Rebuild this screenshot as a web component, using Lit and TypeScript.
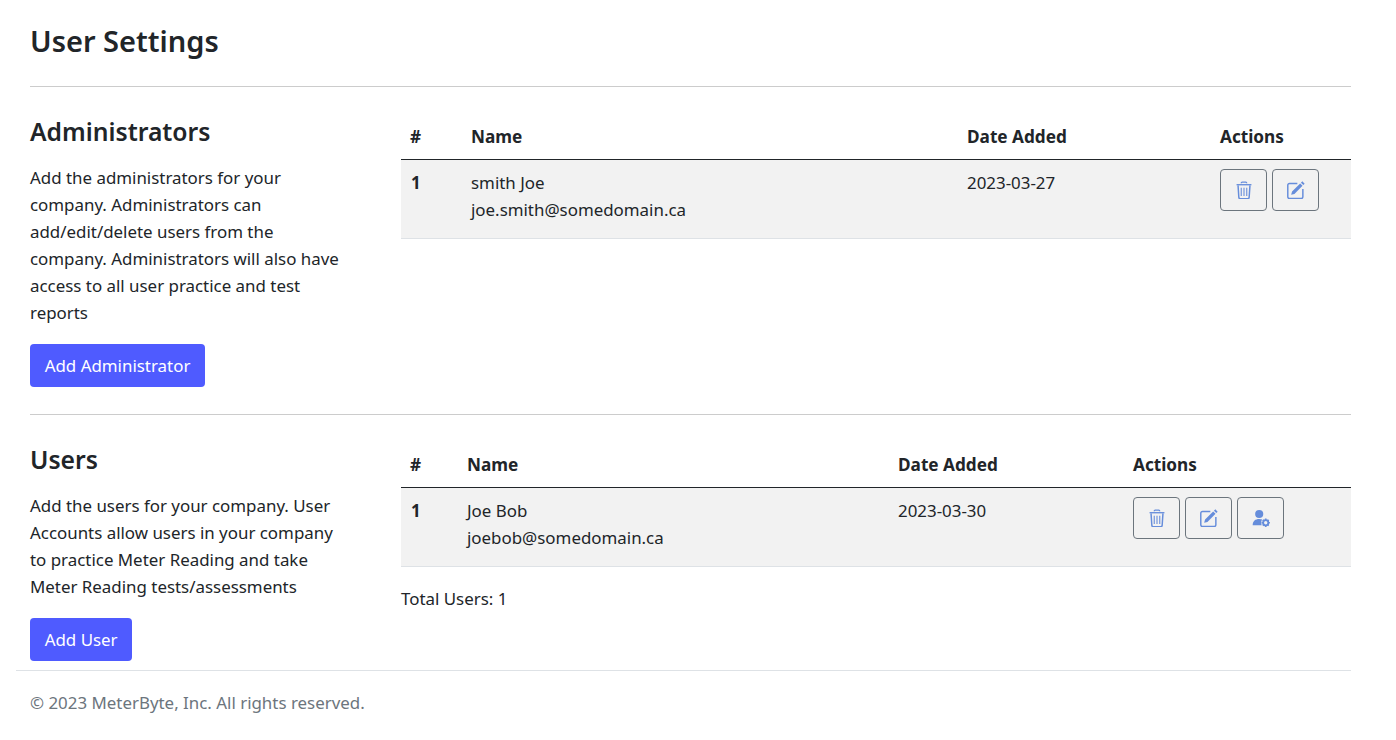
import { LitElement, html, css, svg } from "lit";
import { customElement } from "lit/decorators.js";

const trash = svg`<path d="M5.6 1.9c0-.5.3-.9.8-.9h3.2c.5 0 .8.4.8.9" fill="none" stroke="currentColor" stroke-width="1.2"/><path d="M1.4 2.7h13.2v1.2H1.4z" fill="currentColor"/><path d="M2.7 3.9l.7 10.6c.05.8.6 1.3 1.3 1.3h6.6c.7 0 1.25-.5 1.3-1.3l.7-10.6" fill="none" stroke="currentColor" stroke-width="1.3"/><path d="M5.6 6v7.4M8 6v7.4M10.4 6v7.4" stroke="currentColor" stroke-width="1.2" fill="none" opacity=".8"/>`;
const edit = svg`<path d="M9.2 2.2H2.2C1.3 2.2.7 2.8.7 3.7v10.4c0 .9.6 1.5 1.5 1.5h10.4c.9 0 1.5-.6 1.5-1.5V7" fill="none" stroke="currentColor" stroke-width="1.3"/><path d="M13.6.3l2.1 2.1-1.2 1.2-2.1-2.1zM11.7 2.2l2.1 2.1-7.2 7.2-2.9.8.8-2.9z" fill="currentColor"/>`;
const userCog = svg`<circle cx="6.4" cy="4.4" r="3.6" fill="currentColor"/><path d="M.6 14.4c0-3.8 2.4-5.6 5.8-5.6 1 0 1.9.15 2.7.5-.9 1.1-1.2 3.2-.5 5.1z" fill="currentColor"/><circle cx="12.2" cy="12.2" r="2.3" fill="none" stroke="currentColor" stroke-width="1.6"/><path d="M12.2 8.5v1.6M12.2 14.3v1.6M8.5 12.2h1.6M14.3 12.2h1.6M9.6 9.6l1.1 1.1M13.7 13.7l1.1 1.1M14.8 9.6l-1.1 1.1M10.7 13.7l-1.1 1.1" stroke="currentColor" stroke-width="1.5" fill="none"/>`;

const icon = (body: unknown) => html`<button class="act"><svg viewBox="0 0 16 16" width="18" height="18" aria-hidden="true">${body}</svg></button>`;

@customElement("app-root")
export class AppRoot extends LitElement {
  static styles = css`
    :host { display: block; font-family: "Noto Sans", "Liberation Sans", sans-serif; font-size: 16.9px; line-height: 27px; color: #212529; background: #fff; width: 1396px; height: 740px; overflow: hidden; }
    .page { width: 1335px; margin-left: 16px; }
    .main { padding-left: 14px; }
    h1 { margin: 0; font-size: 29px; line-height: 38px; font-weight: 600; padding: 22px 0 26px; }
    hr { border: 0; border-top: 1px solid #ccc; margin: 0; }
    .sec { display: flex; box-sizing: border-box; padding-top: 27px; }
    .sec.a { height: 327px; }
    .sec.b { height: 255px; }
    .left { width: 371px; flex: none; }
    .right { flex: 1; min-width: 0; }
    h2 { margin: 1px 0 15px; font-size: 24.7px; line-height: 34px; font-weight: 600; }
    p { margin: 0 0 18px; }
    .add { display: block; height: 43px; padding: 0 14.7px; border: 0; border-radius: 4px; background: #4f5bff; color: #fff; font: inherit; }
    table { width: 950px; border-collapse: collapse; table-layout: fixed; }
    th { text-align: left; font-weight: 700; font-size: 17.2px; padding: 0 8px 9px; height: 36px; box-sizing: content-box; line-height: 27px; border-bottom: 1px solid #212529; vertical-align: bottom; }
    td { padding: 9px 8px; height: 60px; box-sizing: content-box; vertical-align: top; background: #f2f2f2; border-bottom: 1px solid #dee2e6; line-height: 27px; }
    th.n { padding-left: 9px; }
    td.n { padding-left: 10px; font-weight: 700; }
    .a .c1 { width: 62px; } .a .c2 { width: 496px; } .a .c3 { width: 253px; }
    .b .c1 { width: 58px; } .b .c2 { width: 431px; } .b .c3 { width: 235px; }
    .acts { display: flex; gap: 4.6px; }
    .act { width: 47.4px; height: 42px; padding: 0; display: flex; align-items: center; justify-content: center; background: transparent; border: 1px solid #6c757d; border-radius: 4px; color: #668ddb; }
    .total { margin-top: 18px; }
    footer { border-top: 1px solid #dee2e6; padding: 18px 0 0 14px; color: #6c757d; line-height: 27px; }
  `;

  private table(name: string, mail: string, date: string, cog: boolean) {
    return html`<table>
      <colgroup><col class="c1" /><col class="c2" /><col class="c3" /><col /></colgroup>
      <thead><tr><th class="n">#</th><th>Name</th><th>Date Added</th><th>Actions</th></tr></thead>
      <tbody><tr><td class="n">1</td><td>${name}<br />${mail}</td><td>${date}</td>
        <td><div class="acts">${icon(trash)}${icon(edit)}${cog ? icon(userCog) : ""}</div></td></tr></tbody>
    </table>`;
  }

  render() {
    return html`<div class="page">
      <div class="main">
        <h1>User Settings</h1>
        <hr />
        <section class="sec a">
          <div class="left">
            <h2>Administrators</h2>
            <p>Add the administrators for your<br />company. Administrators can<br />add/edit/delete users from the<br />company. Administrators will also have<br />access to all user practice and test<br />reports</p>
            <button class="add">Add Administrator</button>
          </div>
          <div class="right">${this.table("smith Joe", "joe.smith@somedomain.ca", "2023-03-27", false)}</div>
        </section>
        <hr />
        <section class="sec b">
          <div class="left">
            <h2>Users</h2>
            <p>Add the users for your company. User<br />Accounts allow users in your company<br />to practice Meter Reading and take<br />Meter Reading tests/assessments</p>
            <button class="add">Add User</button>
          </div>
          <div class="right">${this.table("Joe Bob", "joebob@somedomain.ca", "2023-03-30", true)}
            <div class="total">Total Users: 1</div>
          </div>
        </section>
      </div>
      <footer>© 2023 MeterByte, Inc. All rights reserved.</footer>
    </div>`;
  }
}
